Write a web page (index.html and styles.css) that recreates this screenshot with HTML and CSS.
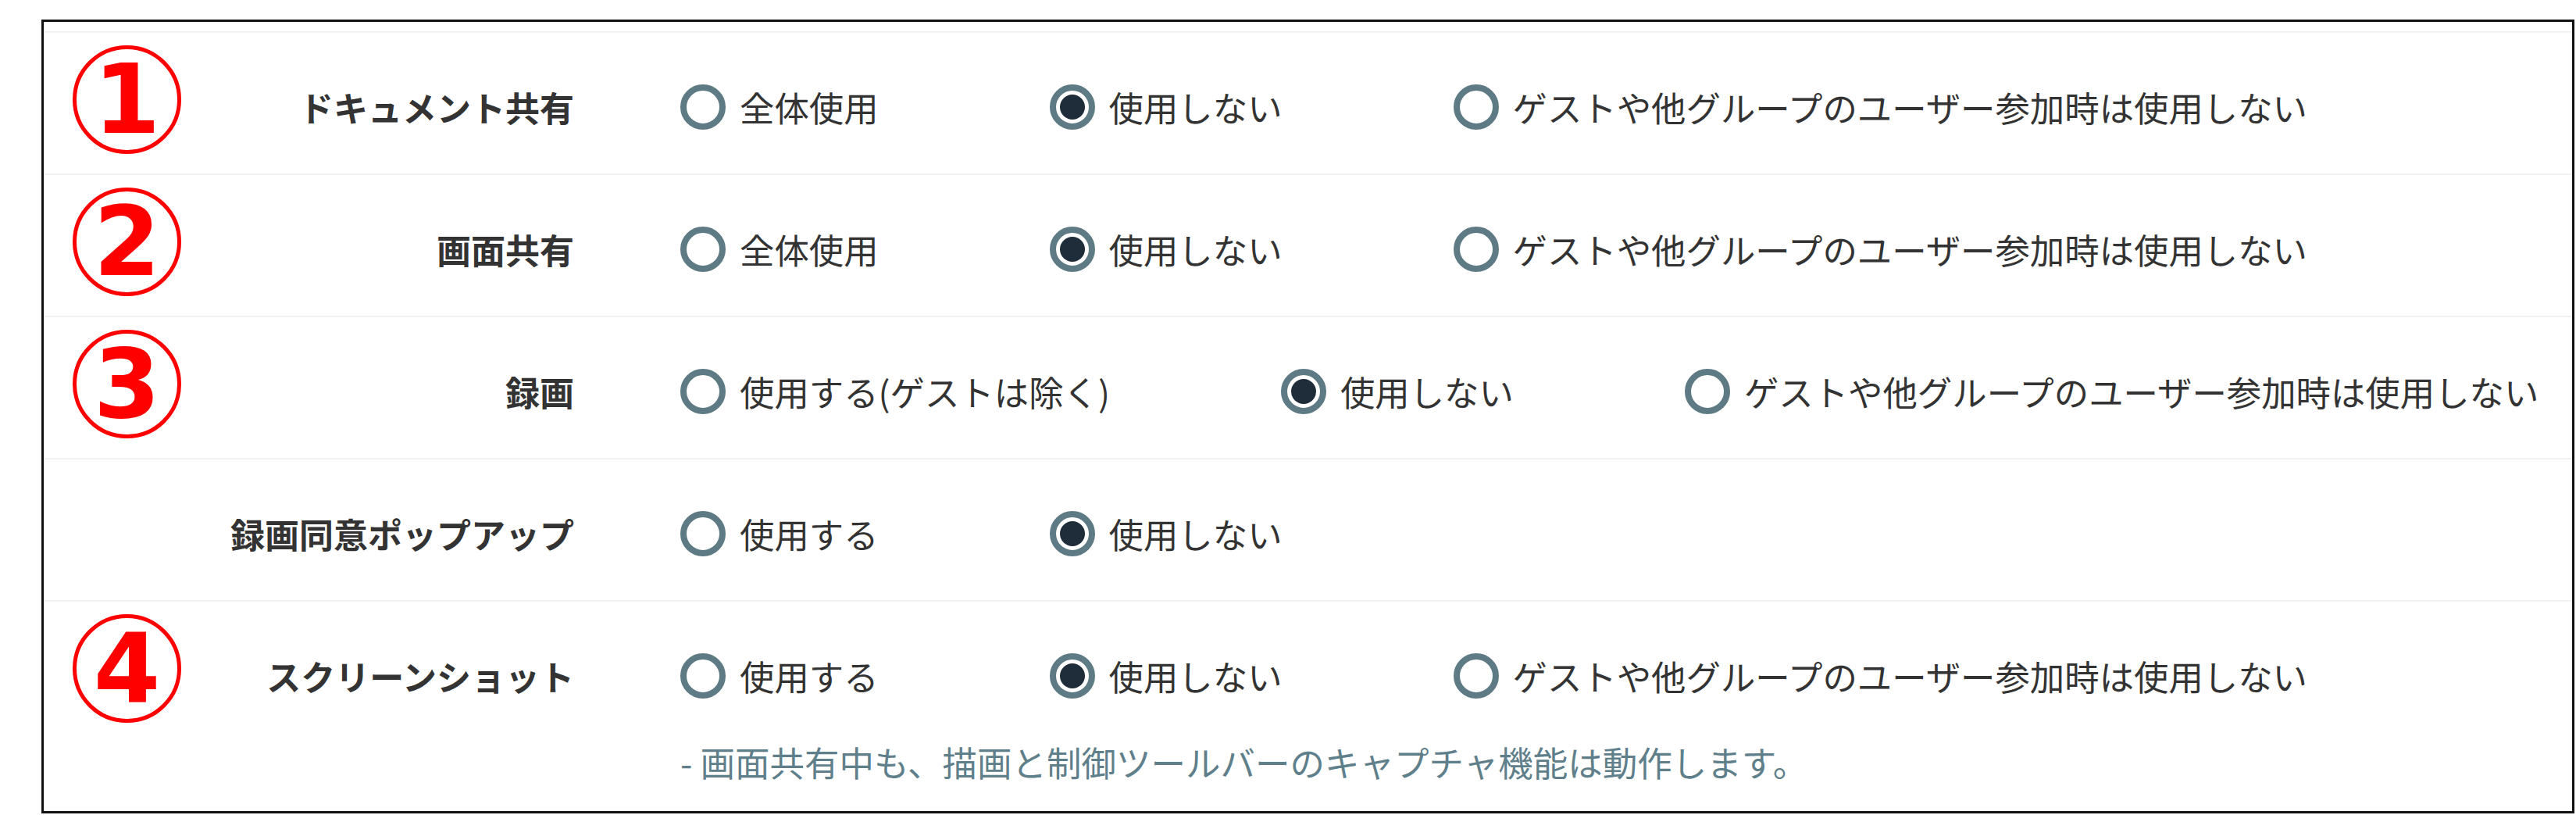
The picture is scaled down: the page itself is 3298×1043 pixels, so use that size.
FILE: index.html
```html
<!DOCTYPE html>
<html lang="ja">
<head>
<meta charset="utf-8">
<link rel="stylesheet" href="styles.css">
</head>
<body>
<div class="panel">
  <div class="row">
    <div class="mark">1</div>
    <div class="label">ドキュメント共有</div>
    <div class="options">
      <div class="choices">
        <label class="opt"><span class="radio"></span><span>全体使用</span></label>
        <label class="opt"><span class="radio checked"></span><span>使用しない</span></label>
        <label class="opt"><span class="radio"></span><span>ゲストや他グループのユーザー参加時は使用しない</span></label>
      </div>
    </div>
  </div>
  <div class="row">
    <div class="mark">2</div>
    <div class="label">画面共有</div>
    <div class="options">
      <div class="choices">
        <label class="opt"><span class="radio"></span><span>全体使用</span></label>
        <label class="opt"><span class="radio checked"></span><span>使用しない</span></label>
        <label class="opt"><span class="radio"></span><span>ゲストや他グループのユーザー参加時は使用しない</span></label>
      </div>
    </div>
  </div>
  <div class="row">
    <div class="mark">3</div>
    <div class="label">録画</div>
    <div class="options">
      <div class="choices">
        <label class="opt"><span class="radio"></span><span>使用する(ゲストは除く)</span></label>
        <label class="opt"><span class="radio checked"></span><span>使用しない</span></label>
        <label class="opt"><span class="radio"></span><span>ゲストや他グループのユーザー参加時は使用しない</span></label>
      </div>
    </div>
  </div>
  <div class="row">
    <div class="mark mark-empty"></div>
    <div class="label">録画同意ポップアップ</div>
    <div class="options">
      <div class="choices">
        <label class="opt"><span class="radio"></span><span>使用する</span></label>
        <label class="opt"><span class="radio checked"></span><span>使用しない</span></label>
      </div>
    </div>
  </div>
  <div class="row row-last">
    <div class="mark">4</div>
    <div class="label">スクリーンショット</div>
    <div class="options">
      <div class="choices">
        <label class="opt"><span class="radio"></span><span>使用する</span></label>
        <label class="opt"><span class="radio checked"></span><span>使用しない</span></label>
        <label class="opt"><span class="radio"></span><span>ゲストや他グループのユーザー参加時は使用しない</span></label>
      </div>
      <div class="note">- 画面共有中も、描画と制御ツールバーのキャプチャ機能は動作します。</div>
    </div>
  </div>
</div>
</body>
</html>
```
FILE: styles.css
```css
html, body {
  margin: 0;
  padding: 0;
  background: #ffffff;
}

body {
  font-family: "Noto Sans CJK JP", "Noto Sans", sans-serif;
  color: #333333;
}

.panel {
  box-sizing: border-box;
  margin: 25px 2px 0 53px;
  border: 3px solid #111111;
  padding-top: 12px;
  background: #ffffff;
}

.row {
  box-sizing: border-box;
  height: 182px;
  border-top: 2px solid #f1f1f1;
  display: flex;
  align-items: flex-start;
}

.row-last {
  height: auto;
  padding-bottom: 34px;
}

.mark {
  box-sizing: border-box;
  flex: 0 0 auto;
  width: 139px;
  height: 139px;
  margin-left: 37px;
  margin-top: 16px;
  border: 5px solid #ff0000;
  border-radius: 50%;
  color: #ff0000;
  font-family: "DejaVu Sans", sans-serif;
  font-weight: 700;
  font-size: 123px;
  line-height: 1;
  display: flex;
  align-items: center;
  justify-content: center;
}

.mark-empty {
  border-color: transparent;
}

.label {
  flex: 0 0 auto;
  width: 503px;
  margin-top: 66px;
  height: 58px;
  line-height: 58px;
  text-align: right;
  font-size: 44px;
  font-weight: 700;
  color: #333333;
  white-space: nowrap;
}

.options {
  margin-left: 136px;
  margin-top: 66px;
  display: flex;
  flex-direction: column;
}

.choices {
  display: flex;
  align-items: center;
  height: 58px;
}

.opt {
  display: flex;
  align-items: center;
  gap: 18px;
  margin-right: 219px;
  font-size: 44.4px;
  line-height: 58px;
  color: #333333;
  white-space: nowrap;
}

.opt:last-child {
  margin-right: 0;
}

.radio {
  box-sizing: border-box;
  flex: 0 0 auto;
  width: 58px;
  height: 58px;
  border: 8px solid #5e7a84;
  border-radius: 50%;
  display: flex;
  align-items: center;
  justify-content: center;
}

.radio.checked::after {
  content: "";
  width: 32px;
  height: 32px;
  border-radius: 50%;
  background: #1f2c39;
}

.note {
  margin-top: 52px;
  height: 58px;
  line-height: 58px;
  font-size: 44.5px;
  color: #5f7f8b;
  white-space: nowrap;
}
```
